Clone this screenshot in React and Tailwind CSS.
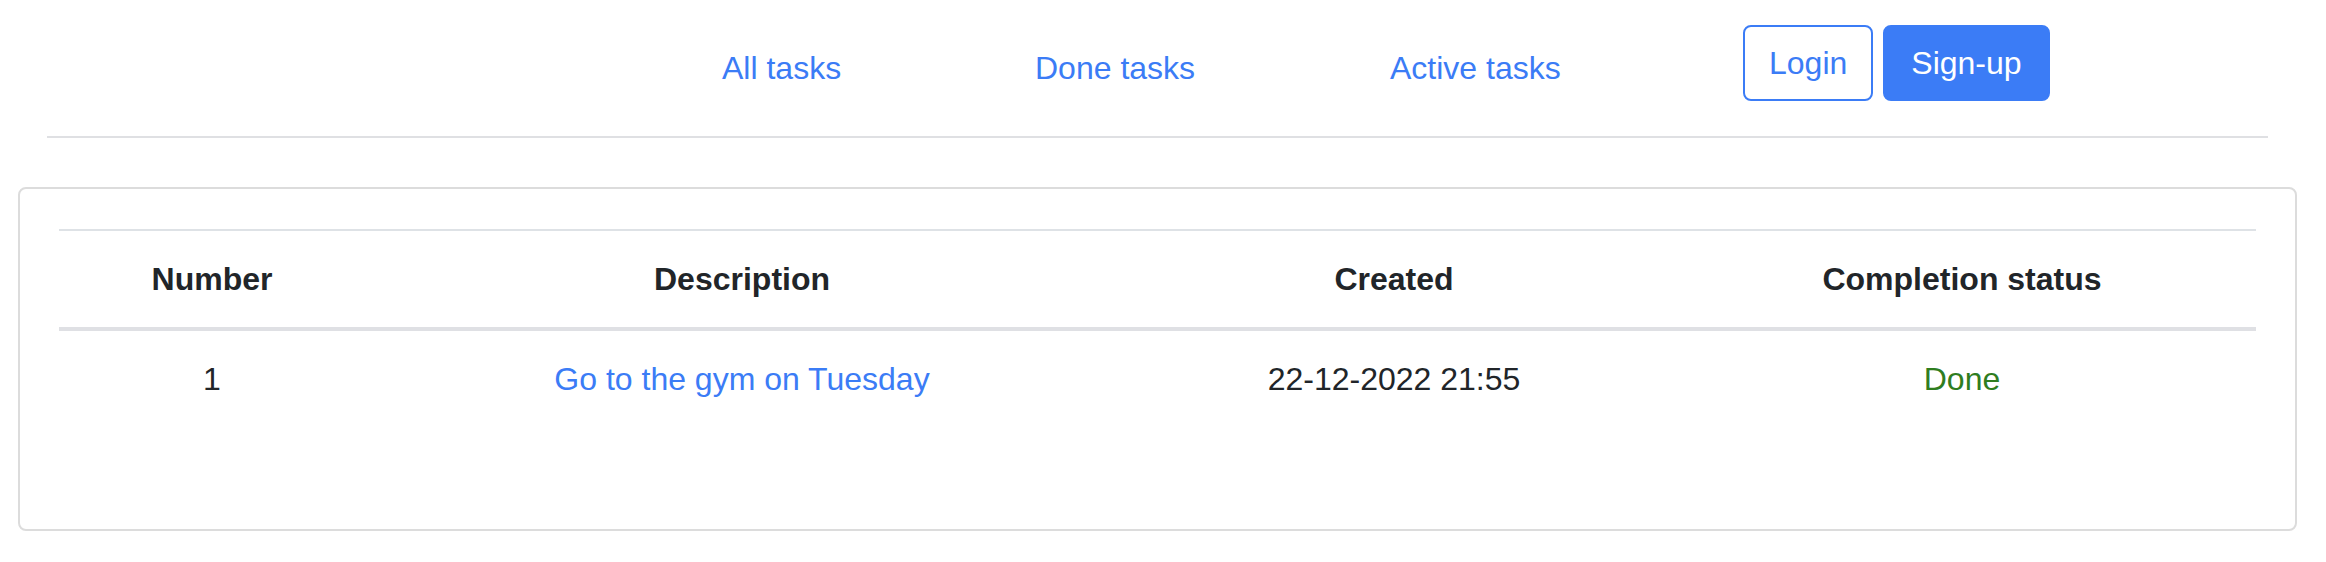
const links = [
  { label: 'All tasks', width: 'w-[313px]' },
  { label: 'Done tasks', width: 'w-[355px]' },
  { label: 'Active tasks', width: 'w-[353px]' },
];

const columns = [
  { key: 'number', label: 'Number', width: 'w-[306px]' },
  { key: 'description', label: 'Description', width: 'w-[754px]' },
  { key: 'created', label: 'Created', width: 'w-[550px]' },
  { key: 'status', label: 'Completion status', width: 'w-[586px]' },
];

const tasks = [
  { id: 1, description: 'Go to the gym on Tuesday', created: '22-12-2022 21:55', done: true },
];

function Header() {
  return (
    <header className="ml-[47px] w-[2221px] h-[138px] flex items-center border-b-2 border-[#dfe0e3]">
      <nav className="flex items-center pl-[675px]">
        {links.map((l) => (
          <div key={l.label} className={l.width}>
            <a href="#" className="text-[#3b7cf6] leading-[48px]">
              {l.label}
            </a>
          </div>
        ))}
      </nav>
      <div className="flex items-center gap-[10px] mt-[-10px]">
        <button className="border-2 border-[#3b7cf6] text-[#3b7cf6] rounded-[8px] px-[24px] py-[12px] leading-[48px]">
          Login
        </button>
        <button className="border-2 border-[#3b7cf6] bg-[#3b7cf6] text-white rounded-[8px] px-[26px] py-[12px] leading-[48px]">
          Sign-up
        </button>
      </div>
    </header>
  );
}

export default function App() {
  return (
    <div
      className="w-[2326px] h-[562px] bg-white text-[32px] text-[#212529] overflow-hidden"
      style={{ fontFamily: '"Liberation Sans", Arial, sans-serif' }}
    >
      <Header />

      <div className="ml-[18px] mt-[49px] w-[2279px] h-[344px] border-2 border-[#dcdcdc] rounded-[8px] px-[39px] pt-[40px]">
        <div className="border-t-2 border-[#dee2e6]">
          <div className="flex border-b-4 border-[#dfe0e4] font-bold">
            {columns.map((c) => (
              <div key={c.key} className={`${c.width} text-center py-[24px] leading-[48px]`}>
                {c.label}
              </div>
            ))}
          </div>
          {tasks.map((t) => (
            <div key={t.id} className="flex">
              <div className="w-[306px] text-center py-[24px] leading-[48px]">{t.id}</div>
              <div className="w-[754px] text-center py-[24px] leading-[48px]">
                <a href="#" className="text-[#3b7cf6]">{t.description}</a>
              </div>
              <div className="w-[550px] text-center py-[24px] leading-[48px]">{t.created}</div>
              <div className="w-[586px] text-center py-[24px] leading-[48px] text-[#2f7d1f]">
                {t.done ? 'Done' : 'Active'}
              </div>
            </div>
          ))}
        </div>
      </div>
    </div>
  );
}
